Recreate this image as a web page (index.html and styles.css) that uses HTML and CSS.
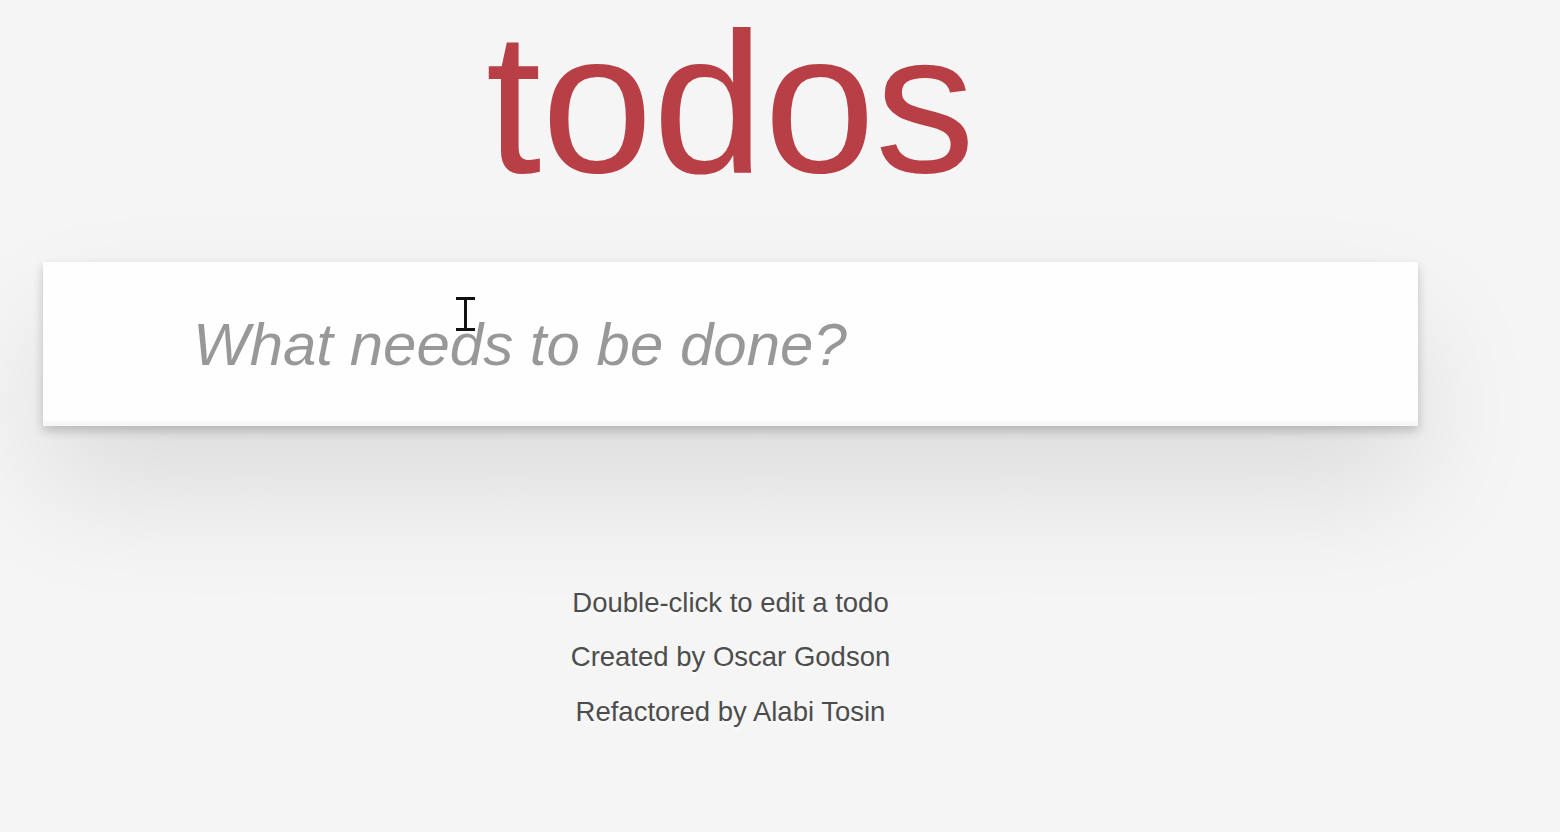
FILE: index.html
```html
<!DOCTYPE html>
<html lang="en">
<head>
<meta charset="utf-8">
<title>todos</title>
<link rel="stylesheet" href="styles.css">
</head>
<body>
  <div class="page">
    <header class="header">
      <h1 class="title">todos</h1>
    </header>
    <section class="todoapp">
      <input class="new-todo" type="text" placeholder="What needs to be done?">
    </section>
    <footer class="info">
      <p>Double-click to edit a todo</p>
      <p>Created by Oscar Godson</p>
      <p>Refactored by Alabi Tosin</p>
    </footer>
  </div>
  <svg class="cursor" width="19" height="34" viewBox="0 0 19 34" aria-hidden="true">
    <rect x="0" y="0" width="19" height="3" fill="#111"/>
    <rect x="8" y="0" width="3" height="34" fill="#111"/>
    <rect x="0" y="31" width="19" height="3" fill="#111"/>
  </svg>
</body>
</html>
```

FILE: styles.css
```css
html, body {
  margin: 0;
  padding: 0;
}

body {
  background: #f5f5f5;
  font-family: "Liberation Sans", Arial, Helvetica, sans-serif;
  color: #4d4d4d;
  min-height: 832px;
  position: relative;
  overflow: hidden;
}

.page {
  width: 1375px;
  margin-left: 43px;
  display: flex;
  flex-direction: column;
}

.header {
  padding-top: 12px;
  height: 262px;
  box-sizing: border-box;
}

.title {
  margin: 0;
  font-size: 200px;
  line-height: 182px;
  font-weight: 200;
  text-align: center;
  color: #b83f45;
}

.todoapp {
  background: #fff;
  box-shadow: 0 5px 10px 0 rgba(0, 0, 0, 0.2), 0 62.5px 125px 0 rgba(0, 0, 0, 0.1);
}

.new-todo {
  display: block;
  width: 100%;
  box-sizing: border-box;
  margin: 0;
  border: none;
  outline: none;
  padding: 40px 40px 40px 150px;
  height: 164px;
  font-family: "Liberation Sans", Arial, Helvetica, sans-serif;
  font-size: 60px;
  line-height: 84px;
  color: #4d4d4d;
  background: rgba(0, 0, 0, 0.003);
  box-shadow: inset 0 -5px 2.5px rgba(0, 0, 0, 0.03);
}

.new-todo::placeholder {
  font-style: italic;
  font-weight: 400;
  color: rgba(0, 0, 0, 0.4);
}

.info {
  margin-top: 162.5px;
  display: flex;
  flex-direction: column;
  gap: 27px;
  text-align: center;
  font-size: 27.5px;
  color: #4d4d4d;
  text-shadow: 0 2.5px 0 rgba(255, 255, 255, 0.5);
}

.info p {
  margin: 0;
  line-height: 27.5px;
}

.cursor {
  position: absolute;
  left: 456px;
  top: 297px;
}
```
